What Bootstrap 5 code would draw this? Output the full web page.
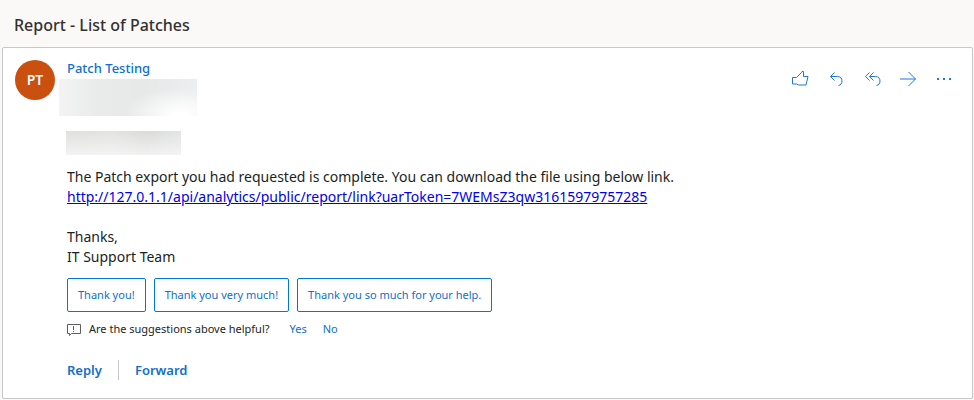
<!DOCTYPE html>
<html lang="en">
<head>
<meta charset="utf-8">
<meta name="viewport" content="width=device-width, initial-scale=1">
<title>Report - List of Patches</title>
<link href="https://cdn.jsdelivr.net/npm/bootstrap@5.3.0/dist/css/bootstrap.min.css" rel="stylesheet">
<style>
  body { background: #faf9f8; color: #201f1e; font-family: "Segoe UI", "Noto Sans", "Open Sans", sans-serif; font-size: 14px; line-height: 20px; }
  .subject { font-size: 16px; line-height: 20px; font-weight: 500; color: #323130; padding: 15px 14px 12px; }
  .message { border: 1px solid #c8c8c8; border-radius: 2px; margin: 0 1px 0 2px; padding: 12px 12px 18px; box-shadow: 0 1px 1px #e4e3e2; }
  .avatar { width: 40px; height: 40px; background: #ca5010; font-size: 14px; }
  .blue { color: #0f6fcb; }
  .sender { font-size: 13px; line-height: 16px; font-weight: 500; }
  .address-block { width: 138px; height: 37px; margin: 3px 0 15px -8px; background: radial-gradient(ellipse 56px 26px at 88% 96%, #fff 10%, rgba(255,255,255,0)), linear-gradient(90deg, #f3f3f3, #e9eaea 30%, #e7e8e8 60%, #eceeef); }
  .greeting-block { width: 115px; height: 24px; margin: 0 0 12px -1px; background: linear-gradient(180deg, rgba(245,245,245,0), rgba(245,245,245,.9)), linear-gradient(90deg, #dfdfdd, #e3e3e2 40%, #dadad8 70%, #e2e4e6); }
  .report-link { color: #0000ee; }
  .plain { border: 0; background: none; padding: 0; }
  .tools { gap: 16px; padding: 9px 6px 0 0; }
  .tools svg { display: block; width: 20px; height: 20px; }
  .suggestions { margin-top: 11px; }
  .suggestion { --bs-btn-color: #0f6fcb; --bs-btn-border-color: #0078d4; --bs-btn-hover-bg: #eff6fc; --bs-btn-hover-color: #0f6fcb; --bs-btn-padding-x: 10px; --bs-btn-padding-y: 8px; --bs-btn-font-size: 11px; --bs-btn-line-height: 16px; --bs-btn-border-radius: 2px; line-height: 16px; }
  .feedback { font-size: 11px; line-height: 16px; margin-top: 9px; }
  .actions { margin-top: 23px; font-size: 13px; line-height: 20px; }
  .actions .forward { border-left: 1px solid #c8c8c8; padding-left: 16px; }
  .actions .reply { padding-right: 16px; }
</style>
</head>
<body>
<header><h1 class="subject m-0">Report - List of Patches</h1></header>
<main class="message bg-white d-flex align-items-start">
  <div class="avatar rounded-circle text-white fw-semibold d-flex align-items-center justify-content-center flex-shrink-0">PT</div>
  <div class="flex-grow-1 ms-2 ps-1">
    <div class="sender blue">Patch Testing</div>
    <div class="address-block"></div>
    <div class="greeting-block"></div>
    <p class="m-0">The Patch export you had requested is complete. You can download the file using below link.<br>
      <a class="report-link" href="http://127.0.1.1/api/analytics/public/report/link?uarToken=7WEMsZ3qw31615979757285">http://127.0.1.1/api/analytics/public/report/link?uarToken=7WEMsZ3qw31615979757285</a><br><br>
      Thanks,<br>IT Support Team</p>
    <div class="suggestions d-flex flex-wrap gap-2">
      <button type="button" class="btn suggestion">Thank you!</button>
      <button type="button" class="btn suggestion">Thank you very much!</button>
      <button type="button" class="btn suggestion">Thank you so much for your help.</button>
    </div>
    <div class="feedback d-flex gap-3 align-items-center">
      <div class="d-flex gap-2 align-items-center me-1">
        <svg width="14" height="14" viewBox="0 0 14 14" fill="none" stroke="#605e5c" aria-hidden="true"><path d="M.5 2.500h13v9H4.500L2.500 13.500v-2h-2z"/><path d="M6.500 4v4M6.500 9v1"/></svg>
        <span>Are the suggestions above helpful?</span>
      </div>
      <button type="button" class="plain blue">Yes</button>
      <button type="button" class="plain blue">No</button>
    </div>
    <div class="actions d-flex">
      <button type="button" class="plain blue fw-semibold reply">Reply</button>
      <button type="button" class="plain blue fw-semibold forward">Forward</button>
    </div>
  </div>
  <div class="tools d-flex">
    <button type="button" class="plain" aria-label="Like"><svg viewBox="0 0 20 20" fill="none" stroke="#1f78d1"><path d="M2.500 8.500h4L11.500 3.500l.5-1h1.500v5h4.500l-2 8.500H8.500l-2-1h-4z"/></svg></button>
    <button type="button" class="plain" aria-label="Reply"><svg viewBox="0 0 20 20" fill="none" stroke="#1f78d1"><path d="M8.500 3.500l-4 4 4 4M4.500 7.500h7c3 0 4.500 2 4.500 4.500s-1.500 4-3.500 4.500"/></svg></button>
    <button type="button" class="plain" aria-label="Reply all"><svg viewBox="0 0 20 20" fill="none" stroke="#1f78d1"><path d="M7.500 3.500l-4 4 4 4M11.500 3.500l-4 4 4 4M7.500 7.500h6c3 0 4.500 2 4.500 4.500s-1.500 4-3.500 4.500"/></svg></button>
    <button type="button" class="plain" aria-label="Forward"><svg viewBox="0 0 20 20" fill="none" stroke="#1f78d1"><path d="M2 10h15.500M10.500 3l7 7-7 7"/></svg></button>
    <button type="button" class="plain" aria-label="More actions"><svg viewBox="0 0 20 20" fill="#1f78d1"><path d="M3 9h2v2H3zM9 9h2v2H9zM15 9h2v2h-2z"/></svg></button>
  </div>
</main>
<script src="https://cdn.jsdelivr.net/npm/bootstrap@5.3.0/dist/js/bootstrap.bundle.min.js"></script>
</body>
</html>
